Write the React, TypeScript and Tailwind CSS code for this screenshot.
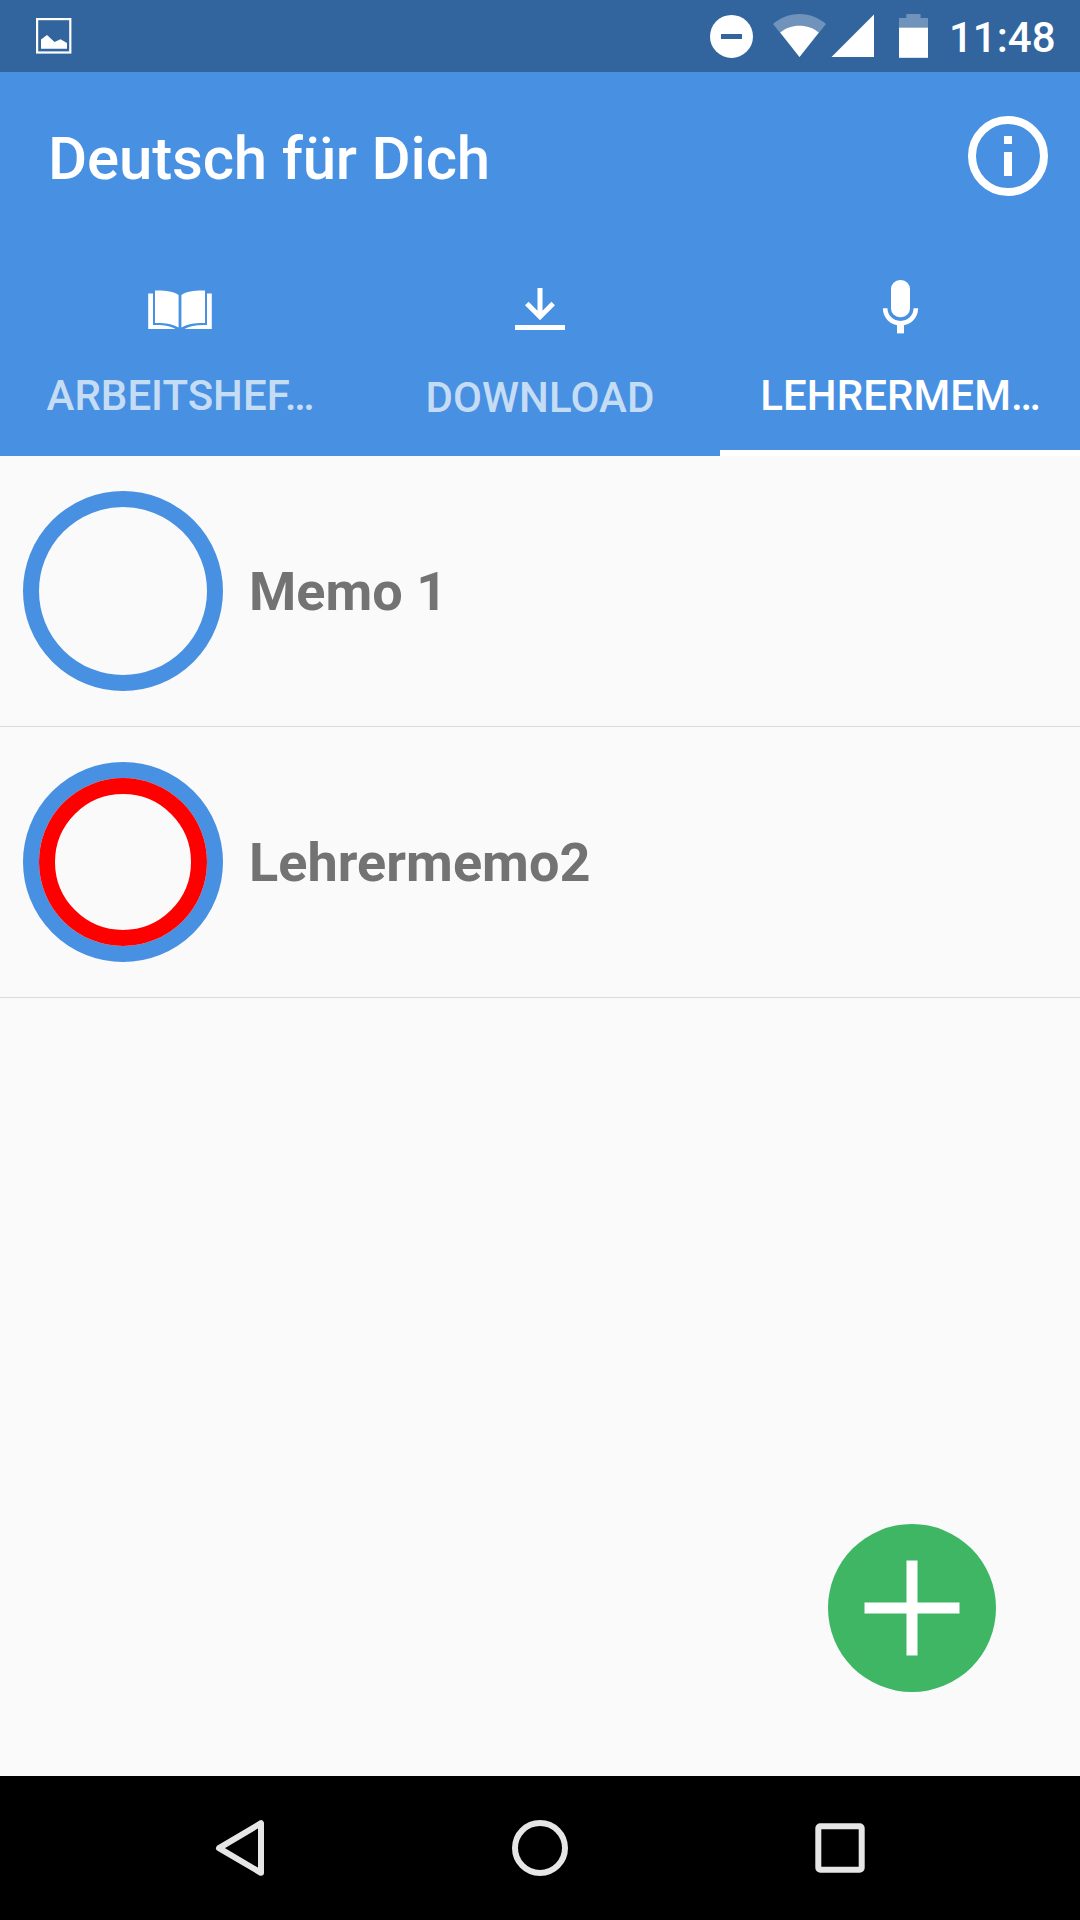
import React from "react";

function StatusBar() {
  return (
    <div className="flex h-[72px] items-center bg-[#32659d] pl-9 text-white">
      <svg className="h-9 w-9" viewBox="0 0 36 36" fill="none">
        <rect x="1.1" y="1.1" width="33.2" height="33.4" stroke="white" strokeWidth="2.2" />
        <path d="M5 30.7V21.5L11 17L18.5 24L24.5 21.2L31 25V30.7Z" fill="white" />
      </svg>
      <svg className="ml-[638px] h-[44px] w-[43px] shrink-0" viewBox="0 0 43 44">
        <circle cx="21.5" cy="22.4" r="21.5" fill="white" />
        <rect x="11" y="20" width="21" height="5" fill="#32659d" />
      </svg>
      <svg className="ml-5 h-[44px] w-[54px] shrink-0" viewBox="0 0 54 44">
        <path d="M26.5 43L0 10C7 4 16 0 26.5 0S46 4 53 10Z" fill="white" fillOpacity="0.3" />
        <path d="M26.5 43L7.2 18.5C13 13.8 19 11.7 26.5 11.7S40 13.8 45.8 18.5Z" fill="white" />
      </svg>
      <svg className="ml-1 h-[44px] w-[43px] shrink-0" viewBox="0 0 43 44">
        <path d="M0.5 43H43V0.5Z" fill="white" />
      </svg>
      <svg className="ml-[25px] h-[44px] w-[29px] shrink-0" viewBox="0 0 29 44">
        <path d="M7.3 0H21.6V4H29V14H0V4H7.3Z" fill="white" fillOpacity="0.3" />
        <rect y="13.7" width="29" height="30.1" fill="white" />
      </svg>
      <span className="mt-1 ml-[21px] text-[42px] leading-[48px] font-medium whitespace-nowrap">11:48</span>
    </div>
  );
}

function BookIcon() {
  return (
    <svg className="h-[72px] w-[96px]" viewBox="0 0 96 72" fill="white">
      <path d="M23 20.5C32 20.3 41 20.8 46.6 25V57.5C41 54 34 52.8 23 52.9Z" />
      <path d="M73 20.5C64 20.3 55 20.8 49.4 25V57.5C55 54 62 52.8 73 52.9Z" />
      <path d="M16.2 23.6H21V55C31 54.6 38 55.8 43.5 59H16.2Z" />
      <path d="M79.8 23.6H75V55C65 54.6 58 55.8 52.5 59H79.8Z" />
    </svg>
  );
}

function DownloadIcon() {
  return (
    <svg className="h-[72px] w-[96px]" viewBox="0 0 96 72" fill="none" stroke="white" strokeWidth="5">
      <path d="M48 18V48M34.8 33.6L48 46.8L61.2 33.6M23 57.4H73" />
    </svg>
  );
}

function MicIcon() {
  return (
    <svg className="h-[72px] w-[96px]" viewBox="0 0 96 72" fill="none">
      <rect x="39" y="10" width="19" height="37.2" rx="9" fill="white" />
      <path d="M33.2 38.3C33.2 47 40 53.2 48.5 53.2S63.8 47 63.8 38.3" stroke="white" strokeWidth="4.6" />
      <rect x="45" y="53" width="7" height="10.4" fill="white" />
    </svg>
  );
}

const tabs = [
  { label: "ARBEITSHEF…", icon: <BookIcon />, text: "text-white/70 pl-[1px]" },
  { label: "DOWNLOAD", icon: <DownloadIcon />, text: "text-white/70 pt-[2px] tracking-[0.1px]" },
  { label: "LEHRERMEM…", icon: <MicIcon />, text: "text-white tracking-[0.1px] pl-[1px]", active: true },
];

function Header() {
  return (
    <header className="bg-[#4890e2] text-white">
      <div className="flex h-[168px] items-center justify-between pr-6 pl-12">
        <h1 className="mt-[6px] text-[60px] leading-[72px] font-medium tracking-[-0.18px]">Deutsch für Dich</h1>
        <svg className="h-24 w-24" viewBox="0 0 96 96" fill="white">
          <circle cx="48" cy="48" r="36" fill="none" stroke="white" strokeWidth="8" />
          <rect x="44" y="28" width="8" height="8" />
          <rect x="44" y="44" width="8" height="24" />
        </svg>
      </div>
      <nav className="grid h-[216px] grid-cols-3">
        {tabs.map((t) => (
          <button key={t.label} className="flex flex-col items-center pt-[30px]">
            {t.icon}
            <span className={`mt-[30px] text-[42px] leading-[48px] font-medium whitespace-nowrap ${t.text}`}>
              {t.label}
            </span>
            {t.active && <span className="mt-auto h-[6px] w-full bg-white" />}
          </button>
        ))}
      </nav>
    </header>
  );
}

function MemoRow({ name, recording }: { name: string; recording?: boolean }) {
  return (
    <li className="flex h-[271px] items-center border-b border-[#dadada] pl-[23px]">
      <span className="flex h-[200px] w-[200px] shrink-0 rounded-full border-[16px] border-[#4890e2]">
        {recording && <span className="flex-1 rounded-full border-[16px] border-[#ff0000]" />}
      </span>
      <span className="mt-[2px] ml-[26px] text-[54px] leading-[64px] font-bold tracking-[0.04px] text-[#737373]">{name}</span>
    </li>
  );
}

function NavBar() {
  return (
    <footer className="flex h-36 items-center justify-around bg-black px-[90px]">
      <svg className="h-[72px] w-[72px]" viewBox="0 0 72 72" fill="none" stroke="#e6e6e6" strokeWidth="6" strokeLinejoin="round">
        <path d="M15 36.2L57 11.2V60.8Z" />
      </svg>
      <svg className="h-[72px] w-[72px]" viewBox="0 0 72 72" fill="none" stroke="#e6e6e6" strokeWidth="6">
        <circle cx="36" cy="36" r="25" />
      </svg>
      <svg className="h-[72px] w-[72px]" viewBox="0 0 72 72" fill="none" stroke="#e6e6e6" strokeWidth="6">
        <rect x="14.3" y="14.3" width="43.4" height="43.4" rx="2" />
      </svg>
    </footer>
  );
}

export default function App() {
  return (
    <div className="flex h-[1920px] w-[1080px] flex-col overflow-hidden bg-[#fafafa] font-['Roboto',sans-serif]">
      <StatusBar />
      <Header />
      <main className="flex flex-1 flex-col">
        <ul>
          <MemoRow name="Memo 1" />
          <MemoRow name="Lehrermemo2" recording />
        </ul>
        <button className="mt-auto mr-[84px] mb-[84px] flex h-[168px] w-[168px] items-center justify-center self-end rounded-full bg-[#3eb664]">
          <svg className="h-24 w-24" viewBox="0 0 96 96" stroke="white" strokeWidth="11">
            <path d="M48 0.5V95.5M0.5 48H95.5" />
          </svg>
        </button>
      </main>
      <NavBar />
    </div>
  );
}
